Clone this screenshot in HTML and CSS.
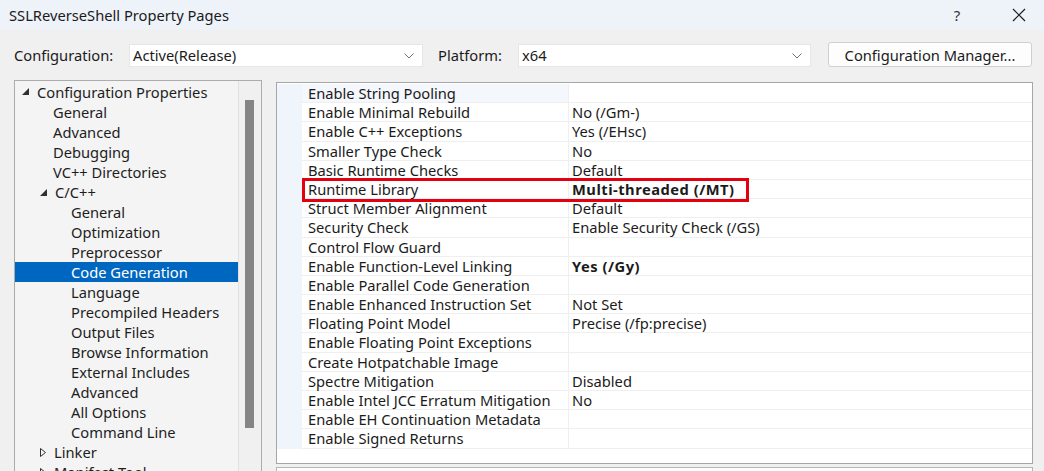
FILE: index.html
```html
<!DOCTYPE html>
<html>
<head>
<meta charset="utf-8">
<title>SSLReverseShell Property Pages</title>
<link rel="stylesheet" href="styles.css">
</head>
<body>
<div class="window">
  <div class="titlebar">
    <span class="title">SSLReverseShell Property Pages</span>
    <span class="tb-help">?</span>
    <span class="tb-close"><svg width="14" height="14" viewBox="0 0 14 14"><path d="M1 1L13 13M13 1L1 13" stroke="#1a1a1a" stroke-width="1.2" fill="none"/></svg></span>
  </div>

  <div class="toolbar">
    <span class="lbl lbl-cfg">Configuration:</span>
    <div class="combo combo-cfg"><span class="combo-text">Active(Release)</span><svg class="chev" width="10" height="6" viewBox="0 0 10 6"><path d="M0.5 0.5L5 5L9.5 0.5" stroke="#707070" stroke-width="1" fill="none"/></svg></div>
    <span class="lbl lbl-plat">Platform:</span>
    <div class="combo combo-plat"><span class="combo-text">x64</span><svg class="chev" width="10" height="6" viewBox="0 0 10 6"><path d="M0.5 0.5L5 5L9.5 0.5" stroke="#707070" stroke-width="1" fill="none"/></svg></div>
    <button class="btn">Configuration Manager...</button>
  </div>

  <div class="main">
    <div class="tree">
      <div class="tree-list">
        <div class="node l0"><svg class="tri" width="7" height="7" viewBox="0 0 7 7"><polygon points="0,7 7,7 7,0" fill="#303030"/></svg>Configuration Properties</div>
        <div class="node l1">General</div>
        <div class="node l1">Advanced</div>
        <div class="node l1">Debugging</div>
        <div class="node l1">VC++ Directories</div>
        <div class="node l1 exp"><svg class="tri" width="7" height="7" viewBox="0 0 7 7"><polygon points="0,7 7,7 7,0" fill="#303030"/></svg>C/C++</div>
        <div class="node l2">General</div>
        <div class="node l2">Optimization</div>
        <div class="node l2">Preprocessor</div>
        <div class="node l2 sel">Code Generation</div>
        <div class="node l2">Language</div>
        <div class="node l2">Precompiled Headers</div>
        <div class="node l2">Output Files</div>
        <div class="node l2">Browse Information</div>
        <div class="node l2">External Includes</div>
        <div class="node l2">Advanced</div>
        <div class="node l2">All Options</div>
        <div class="node l2">Command Line</div>
        <div class="node l1 exp"><svg class="tri" width="6" height="9" viewBox="0 0 6 9"><polygon points="0.5,0.5 5.5,4.5 0.5,8.5" fill="none" stroke="#303030" stroke-width="1"/></svg>Linker</div>
        <div class="node l1 exp"><svg class="tri" width="6" height="9" viewBox="0 0 6 9"><polygon points="0.5,0.5 5.5,4.5 0.5,8.5" fill="none" stroke="#303030" stroke-width="1"/></svg>Manifest Tool</div>
      </div>
      <div class="vscroll"><div class="thumb"></div></div>
    </div>

    <div class="right">
      <div class="grid-panel">
        <div class="prow first"><div class="gut"></div><div class="pname">Enable String Pooling</div><div class="pval"></div></div>
        <div class="prow"><div class="gut"></div><div class="pname">Enable Minimal Rebuild</div><div class="pval">No (/Gm-)</div></div>
        <div class="prow"><div class="gut"></div><div class="pname">Enable C++ Exceptions</div><div class="pval">Yes (/EHsc)</div></div>
        <div class="prow"><div class="gut"></div><div class="pname">Smaller Type Check</div><div class="pval">No</div></div>
        <div class="prow"><div class="gut"></div><div class="pname">Basic Runtime Checks</div><div class="pval">Default</div></div>
        <div class="prow"><div class="gut"></div><div class="pname">Runtime Library</div><div class="pval bold">Multi-threaded (/MT)</div></div>
        <div class="prow"><div class="gut"></div><div class="pname">Struct Member Alignment</div><div class="pval">Default</div></div>
        <div class="prow"><div class="gut"></div><div class="pname">Security Check</div><div class="pval">Enable Security Check (/GS)</div></div>
        <div class="prow"><div class="gut"></div><div class="pname">Control Flow Guard</div><div class="pval"></div></div>
        <div class="prow"><div class="gut"></div><div class="pname">Enable Function-Level Linking</div><div class="pval bold">Yes (/Gy)</div></div>
        <div class="prow"><div class="gut"></div><div class="pname">Enable Parallel Code Generation</div><div class="pval"></div></div>
        <div class="prow"><div class="gut"></div><div class="pname">Enable Enhanced Instruction Set</div><div class="pval">Not Set</div></div>
        <div class="prow"><div class="gut"></div><div class="pname">Floating Point Model</div><div class="pval">Precise (/fp:precise)</div></div>
        <div class="prow"><div class="gut"></div><div class="pname">Enable Floating Point Exceptions</div><div class="pval"></div></div>
        <div class="prow"><div class="gut"></div><div class="pname">Create Hotpatchable Image</div><div class="pval"></div></div>
        <div class="prow"><div class="gut"></div><div class="pname">Spectre Mitigation</div><div class="pval">Disabled</div></div>
        <div class="prow"><div class="gut"></div><div class="pname">Enable Intel JCC Erratum Mitigation</div><div class="pval">No</div></div>
        <div class="prow"><div class="gut"></div><div class="pname">Enable EH Continuation Metadata</div><div class="pval"></div></div>
        <div class="prow"><div class="gut"></div><div class="pname">Enable Signed Returns</div><div class="pval"></div></div>
        <div class="highlight"></div>
      </div>
      <div class="desc-panel"></div>
    </div>
  </div>
</div>
</body>
</html>
```

FILE: styles.css
```css
* { box-sizing: border-box; }
html, body { margin: 0; padding: 0; }
body {
  width: 1044px;
  height: 471px;
  overflow: hidden;
  background: #f0f0f0;
  font-family: "Noto Sans", "Open Sans", sans-serif;
  font-size: 14.7px;
  color: #1b1b1b;
}
.window { width: 1044px; height: 471px; overflow: hidden; }

.titlebar {
  height: 29px;
  background: #eef2f9;
  display: flex;
  align-items: center;
  padding-left: 9px;
}
.title { flex: 1; font-size: 14.7px; color: #1b1b1b; }
.tb-help { width: 16px; text-align: center; margin-right: 47px; font-size: 15px; color: #333; }
.tb-close { width: 14px; height: 14px; margin-right: 18px; display: flex; }

.toolbar {
  height: 38px;
  display: flex;
  align-items: flex-end;
  padding-left: 14px;
}
.lbl { height: 23px; line-height: 23px; }
.lbl-cfg { width: 115px; }
.lbl-plat { width: 80px; margin-left: 15px; }
.combo {
  height: 23px;
  background: #fff;
  border: 1px solid #e6e6e6;
  display: flex;
  align-items: center;
  padding-left: 3px;
  padding-right: 8px;
}
.combo-cfg { width: 294px; }
.combo-plat { width: 293px; }
.combo-text { flex: 1; line-height: 21px; }
.chev { display: block; }
.btn {
  margin-left: 17px;
  width: 204px;
  height: 25px;
  background: #fdfdfd;
  border: 1px solid #d0d0d0;
  border-radius: 3px;
  font-family: inherit;
  font-size: 14.7px;
  color: #1b1b1b;
  padding: 0;
}

.main {
  display: flex;
  padding-left: 14px;
  margin-top: 13px;
  gap: 14px;
}
.tree {
  width: 248px;
  height: 420px;
  border: 1px solid #acacac;
  background: #f4f4f4;
  display: flex;
}
.tree-list { width: 223px; padding-top: 1px; }
.node {
  height: 20px;
  line-height: 20px;
  white-space: nowrap;
  display: flex;
  align-items: center;
  color: #1e1e1e;
}
.node.l0 { padding-left: 7px; }
.node.l0 .tri { margin-right: 8px; margin-top: -2px; }
.node.l1 { padding-left: 38px; }
.node.l1.exp { padding-left: 25px; }
.node.l1.exp .tri { margin-right: 8px; }
.node.l2 { padding-left: 56px; }
.node.sel { background: #0067c0; color: #fff; }

.vscroll {
  width: 23px;
  background: #f0f0f0;
  border-left: 1px solid #e2e2e2;
  padding-top: 19px;
  padding-left: 6px;
}
.thumb { width: 9px; height: 328px; background: #858585; }

.right { width: 757px; margin-top: 2px; }
.grid-panel {
  position: relative;
  height: 382px;
  background: #fff;
  border: 1px solid #a6a6a6;
  padding-top: 1px;
}
.prow {
  display: flex;
  height: 19.2px;
}
.gut { width: 25px; background: #f0f4fb; }
.pname {
  width: 267px;
  padding-left: 6px;
  line-height: 19px;
  border-bottom: 1px solid #efefef;
  border-right: 1px solid #efefef;
  white-space: nowrap;
}
.prow.first .pname { background: #f4f7fc; }
.pval {
  flex: 1;
  padding-left: 3px;
  line-height: 19px;
  border-bottom: 1px solid #efefef;
  white-space: nowrap;
}
.pval.bold { font-weight: 700; letter-spacing: 0.5px; }
.highlight {
  position: absolute;
  left: 25px;
  top: 95px;
  width: 447px;
  height: 24px;
  border: 3px solid #e3000f;
}
.desc-panel {
  margin-top: 3px;
  height: 40px;
  background: #fff;
  border: 1px solid #b4b4b4;
}
```
